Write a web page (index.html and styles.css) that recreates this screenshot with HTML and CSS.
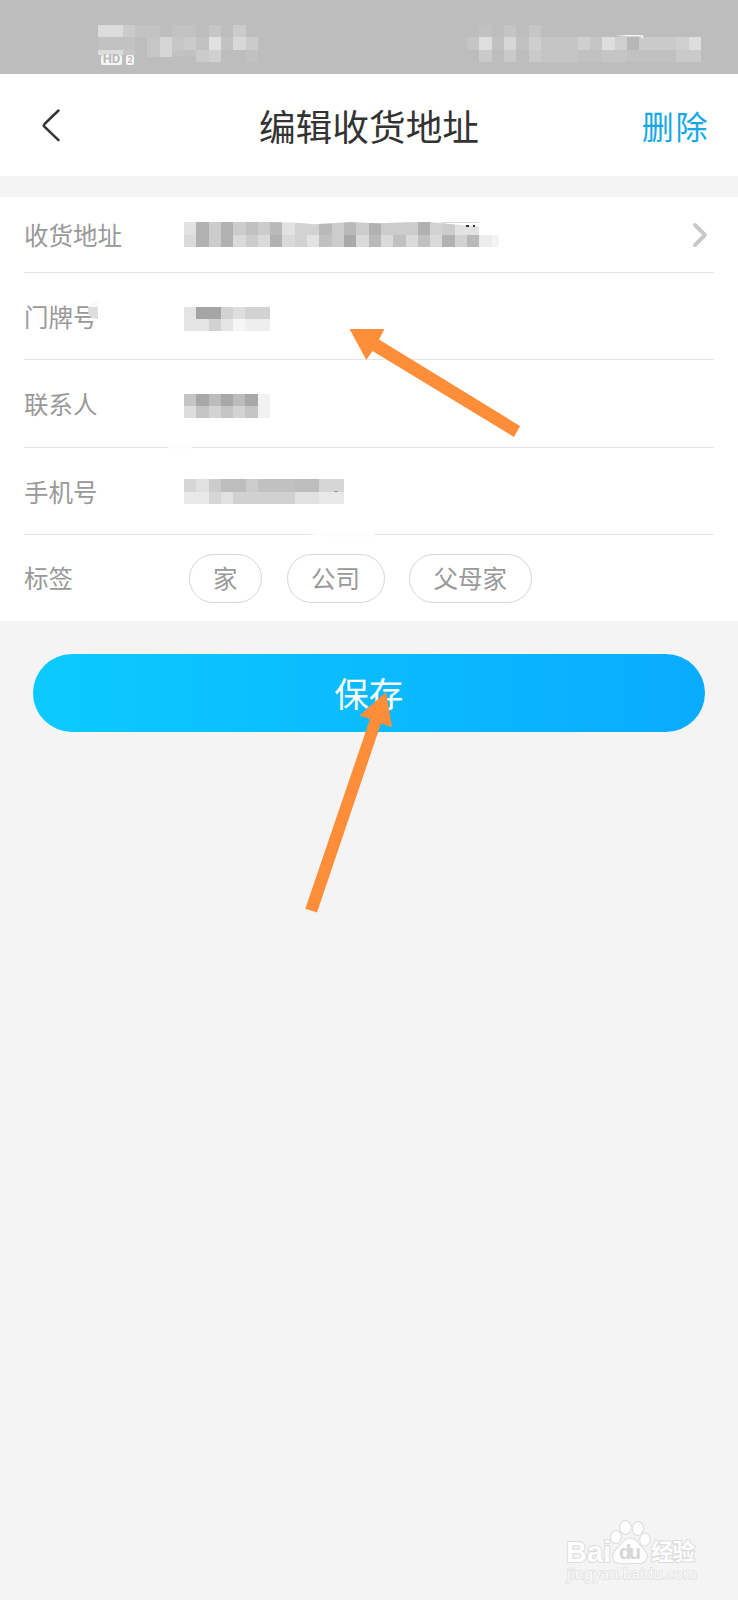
FILE: index.html
```html
<!DOCTYPE html>
<html lang="zh-CN">
<head>
<meta charset="utf-8">
<title>编辑收货地址</title>
<link rel="stylesheet" href="styles.css">
</head>
<body>
<div class="screen">
  <div class="status">
    <div class="status-left">
      <svg class="mosaic" width="160" height="37" viewBox="0 0 13 3" preserveAspectRatio="none" shape-rendering="crispEdges">
        <path fill="#dcdcdc" d="M0 0h2v1h-2zM0 2h2v.45h-2z"/>
        <path fill="#cbcbcb" d="M2 0h1v1h-1zM11 0h1v1h-1zM7 1h1v1h-1zM12 1h1v1h-1zM8 2h1v1h-1z"/>
        <path fill="#c2c2c2" d="M3 0h2v1h-2zM6 0h2v1h-2zM0 1h3v1h-3zM8 1h1v1h-1zM10 1h1v1h-1zM6 2h2v.5h-2zM12 2h1v1h-1z"/>
        <path fill="#c6c6c6" d="M9 0h1v1h-1zM4 1h1v1h-1zM6 1h1v1h-1zM2 2h1v.45h-1zM4 2h1v.6h-1z"/>
        <path fill="#d5d5d5" d="M5 1h1v1.6h-1z"/>
        <path fill="#e1e1e1" d="M9 1h1v1h-1z"/>
        <path fill="#d8d8d8" d="M11 1h1v1h-1z"/>
        <path fill="#d0d0d0" d="M9 2h1v1h-1z"/>
      </svg>
      <div class="hd"><span class="hd-main">HD</span><span class="hd-sim">2</span></div>
    </div>
    <svg class="mosaic" width="234" height="37" viewBox="0 0 19 3" preserveAspectRatio="none" shape-rendering="crispEdges">
      <path fill="#c1c1c1" d="M1 0h1v1h-1zM2 1h1v1h-1zM4 1h1v1h-1zM9 2h2v1h-2zM13 2h4v1h-4z"/>
      <path fill="#c5c5c5" d="M3 0h1v1h-1zM5 0h1v1h-1zM0 1h1v1h-1zM6 1h3v1h-3zM10 1h1v1h-1zM6 2h3v1h-3zM11 2h2v1h-2z"/>
      <path fill="#cacaca" d="M14 1h3v1h-3zM1 2h1v1h-1zM3 2h1v1h-1zM5 2h1v1h-1zM17 2h2v1h-2z"/>
      <path fill="#cfcfcf" d="M5 1h1v1h-1zM9 1h1v1h-1zM12 1h1v1h-1zM17 1h1v1h-1z"/>
      <path fill="#d7d7d7" d="M3 1h1v1h-1z"/>
      <path fill="#dedede" d="M1 1h1v1h-1zM11 1h1v1h-1zM18 1h1v1h-1z"/>
      <path fill="#b7b7b7" d="M13 1h1v1h-1z"/>
      <path fill="#f2f2f2" shape-rendering="auto" d="M12 .9L13 .82H14.300v.26h-.15v-.14h-1.100z"/>
    </svg>
  </div>

  <header class="header">
    <svg class="back" width="20" height="36" viewBox="0 0 20 36"><path d="M17.500 3.500 3.400 17.200Q2.400 18.400 3.400 19.600L17.500 33.200"/></svg>
    <h1 class="title">编辑收货地址</h1>
    <span class="delete">删除</span>
  </header>

  <main class="form">
    <div class="row row-first">
      <span class="label">收货地址</span>
      <svg class="mosaic" width="320" height="25" viewBox="0 0 26 2" preserveAspectRatio="none" shape-rendering="crispEdges">
        <path fill="#e2e2e2" d="M0 0h1v1h-1zM8 0h1v1h-1zM10 1h1v1h-1zM22 0h2v1h-2z"/>
        <path fill="#b1b1b1" d="M1 0h1v2h-1zM3 0h1v2h-1zM15 0h1v1h-1zM19 0h1v1h-1zM21 1h1v1h-1zM7 1h1v1h-1z"/>
        <path fill="#cccccc" d="M2 0h1v2h-1zM4 0h1v1h-1zM6 0h1v1h-1zM12 0h1v2h-1zM14 0h1v1h-1zM16 0h3v1h-3zM21 0h1v1h-1zM5 1h1v1h-1z"/>
        <path fill="#b9b9b9" d="M7 0h1v1h-1zM11 0h1v1h-1zM13 0h1v1h-1zM15 1h1v1h-1zM23 1h1v1h-1z"/>
        <path fill="#c1c1c1" d="M5 0h1v1h-1zM11 1h1v1h-1zM17 1h1v1h-1zM19 1h1v1h-1z"/>
        <path fill="#d2d2d2" d="M9 0h2v1h-2zM20 0h1v1h-1zM9 1h1v1h-1zM22 1h1v1h-1z"/>
        <path fill="#dadada" d="M0 1h1v1h-1zM4 1h1v1h-1zM6 1h1v1h-1zM8 1h1v1h-1zM14 1h1v1h-1zM16 1h1v1h-1zM18 1h1v1h-1zM20 1h1v1h-1z"/>
        <path fill="#a9a9a9" d="M13 1h1v1h-1z"/>
        <path fill="#ececec" d="M24 1h1v1h-1z"/>
        <path fill="#f4f4f4" d="M25 1h.6v1h-.6z"/>
        <path fill="#ffffff" shape-rendering="auto" d="M7 0Q9 0 10.500 .18Q12 .1 13.500 0Q15 .12 16.500 .08Q18 0 19.500 0H24V.35Q21 .12 20 0Z"/>
        <path fill="#d8d8d8" d="M21 0h3v.08h-3z"/>
        <path fill="#333" d="M22.950 .22h.18v.14h-.18zM23.450 .24h.18v.14h-.18z"/>
      </svg>
      <svg class="chevron" width="16" height="26" viewBox="0 0 16 26"><path d="M3 3 12.200 12.200Q13 13 12.200 13.800L3 23"/></svg>
    </div>
    <div class="row">
      <span class="label">门牌号<span class="smudge"></span></span>
      <svg class="mosaic lowered" width="86" height="24" viewBox="0 0 7 2" preserveAspectRatio="none" shape-rendering="crispEdges">
        <path fill="#e4e4e4" d="M0 0h1v2h-1zM1 1h1v1h-1zM3 1h1v1h-1z"/>
        <path fill="#a5a5a5" d="M1 0h2v1h-2z"/>
        <path fill="#d2d2d2" d="M3 0h1v1h-1zM5 0h2v1h-2zM2 1h1v1h-1z"/>
        <path fill="#dedede" d="M4 0h1v1h-1z"/>
        <path fill="#f6f6f6" d="M4 1h1v1h-1z"/>
        <path fill="#eeeeee" d="M5 1h2v1h-2z"/>
      </svg>
    </div>
    <div class="row">
      <span class="label">联系人</span>
      <svg class="mosaic lowered" width="86" height="24" viewBox="0 0 7 2" preserveAspectRatio="none" shape-rendering="crispEdges">
        <path fill="#c5c5c5" d="M0 0h1v1h-1zM1 1h1v1h-1zM3 1h1v1h-1zM5 1h1v1h-1z"/>
        <path fill="#a8a8a8" d="M1 0h1v1h-1zM3 0h1v1h-1zM5 0h1v1h-1z"/>
        <path fill="#bcbcbc" d="M2 0h1v1h-1zM4 0h1v1h-1z"/>
        <path fill="#d3d3d3" d="M2 1h1v1h-1zM4 1h1v1h-1z"/>
        <path fill="#dddddd" d="M0 1h1v1h-1z"/>
        <path fill="#f2f2f2" d="M6 0h1v2h-1z"/>
      </svg>
    </div>
    <div class="row">
      <span class="label">手机号</span>
      <svg class="mosaic" width="160" height="25" viewBox="0 0 13 2" preserveAspectRatio="none" shape-rendering="crispEdges">
        <path fill="#d6d6d6" d="M0 0h1v1h-1zM11 0h2v1h-2zM2 1h1v1h-1z"/>
        <path fill="#e1e1e1" d="M1 0h1v1h-1zM3 1h1v1h-1zM9 1h2v1h-2z"/>
        <path fill="#cccccc" d="M2 0h1v1h-1zM5 0h1v1h-1z"/>
        <path fill="#bdbdbd" d="M3 0h2v1h-2zM9 0h2v1h-2z"/>
        <path fill="#c1c1c1" d="M6 0h3v1h-3z"/>
        <path fill="#d1d1d1" d="M4 1h5v1h-5z"/>
        <path fill="#e9e9e9" d="M0 1h2v1h-2zM11 1h2v1h-2z"/>
        <path fill="#999" d="M12.200 .92h.3v.1h-.3z"/>
      </svg>
    </div>
    <div class="row row-tags">
      <span class="label">标签</span>
      <div class="tags"><span class="tag">家</span><span class="tag">公司</span><span class="tag">父母家</span></div>
    </div>
  </main>

  <button class="save">保存</button>

  <svg class="arrows" width="738" height="1600" viewBox="0 0 738 1600">
    <g fill="#fdfdfd"><rect x="168" y="444" width="24" height="5"/><path d="M290 533Q320 534.500 330 537H374V532Z"/></g>
    <g fill="#ff8d3a">
      <path d="M349.500 329H384.500L379 339.500 520 426 514 437 372.500 351 366.300 360Z"/>
      <path d="M386 692 392 727 381 723.500 317 912.500 305.300 908.800 370 719 359.500 715.500Z"/>
    </g>
  </svg>

  <div class="watermark">
    <svg width="136" height="68" viewBox="0 0 136 68">
      <g class="wm-mark">
        <text class="wm-bai" x="1" y="44" textLength="45">Bai</text>
        <ellipse cx="51" cy="19" rx="5" ry="6"/>
        <ellipse cx="60.500" cy="9.500" rx="5.200" ry="6.500"/>
        <ellipse cx="73" cy="10.500" rx="5" ry="6.500"/>
        <ellipse cx="80" cy="21.500" rx="4.800" ry="6"/>
        <path d="M65 20.500C60 20.500 57 26 52 31C45 38 48 45 56 45C62 45.500 68 45 73 45C82 45.500 85 38 78 31C73 26 71 20.500 65 20.500Z"/>
        <text class="wm-cn" x="86" y="42" textLength="44">经验</text>
      </g>
      <text class="wm-du" x="54" y="41" textLength="22">du</text>
      <text class="wm-url" x="2" y="61" textLength="130">jingyan.baidu.com</text>
    </svg>
  </div>
</div>
</body>
</html>
```

FILE: styles.css
```css
* { box-sizing: border-box; }

body {
  margin: 0;
  background: #f4f4f4;
  font-family: "Noto Sans CJK SC", sans-serif;
}

.screen {
  position: relative;
  display: flex;
  flex-direction: column;
  width: 738px;
  height: 1600px;
  overflow: hidden;
}

.mosaic { display: block; flex: none; }
.lowered { margin-top: 4px; }

.status {
  display: flex;
  justify-content: space-between;
  height: 74px;
  padding: 25px 37px 0 98px;
  background: #bdbdbd;
}

.status-left { width: 160px; }

.hd {
  display: flex;
  align-items: flex-end;
  gap: 4px;
  margin: -7px 0 0 3px;
  font-family: Roboto, sans-serif;
  font-weight: 700;
  color: #b8b8b8;
}

.hd-main,
.hd-sim {
  background: #f5f5f5;
  border-radius: 2px;
  text-align: center;
}

.hd-main {
  width: 21px;
  height: 10px;
  font-size: 13px;
  line-height: 7px;
}

.hd-sim {
  width: 8px;
  height: 10px;
  font-size: 9px;
  line-height: 10px;
}

.header {
  display: grid;
  grid-template-columns: 1fr auto 1fr;
  align-items: center;
  height: 102px;
  padding: 0 29px 0 41px;
  background: #fff;
}

.back {
  fill: none;
  stroke: #333;
  stroke-width: 2.5;
  stroke-linecap: round;
}

.title {
  margin: -1px 0 0 -12px;
  font-size: 36.7px;
  font-weight: 400;
  line-height: 54px;
  color: #333;
}

.delete {
  justify-self: end;
  margin-top: -1px;
  font-size: 32px;
  line-height: 48px;
  letter-spacing: 1.6px;
  color: #14a8e8;
}

.form {
  height: 424px;
  margin-top: 21px;
  padding: 0 24px;
  background: #fff;
}

.row {
  display: flex;
  align-items: center;
  height: 87.5px;
  padding-top: 2px;
  border-bottom: 1.500px solid #e4e4e4;
}

.row-first { height: 75.500px; padding-top: 1px; }
.row-tags { height: 86px; padding-top: 0; border-bottom: 0; }

.label {
  position: relative;
  flex: none;
  width: 160px;
  font-size: 24.5px;
  line-height: 36px;
  color: #999;
}

.smudge {
  position: absolute;
  left: 64px;
  top: 3px;
  width: 10px;
  height: 17px;
  border-radius: 6px 0 0 8px;
  background: linear-gradient(#f8f8f8 30%, #dedede 30%);
}

.chevron {
  margin-left: auto;
  margin-right: 6px;
  fill: none;
  stroke: #c8c8c8;
  stroke-width: 4;
  stroke-linecap: round;
}

.tags {
  display: flex;
  gap: 24.5px;
  margin-left: 4.5px;
}

.tag {
  height: 49px;
  padding: 0 23.5px;
  border: 1px solid #d6d6d6;
  border-radius: 25px;
  font-size: 24.5px;
  line-height: 46px;
  color: #999;
}

.save {
  height: 78px;
  margin: 33px 33px 0 32.5px;
  padding: 0 0 2px;
  border: 0;
  border-radius: 39px;
  background: linear-gradient(90deg, #0bcaff, #0aabff);
  font-family: inherit;
  font-size: 34.5px;
  line-height: 50px;
  color: #fff;
}

.arrows {
  position: absolute;
  left: 0;
  top: 0;
  pointer-events: none;
}

.watermark {
  position: absolute;
  left: 565px;
  top: 1518px;
}

.wm-mark {
  fill: #fdfdfd;
  stroke: #dcdcdc;
  stroke-width: 2;
  paint-order: stroke;
}

.wm-bai { font: 700 29px "Liberation Sans", sans-serif; }
.wm-cn { font: 700 22.5px "Noto Sans CJK SC", sans-serif; }
.wm-du { font: 700 20px "Liberation Sans", sans-serif; fill: #d6d6d6; }

.wm-url {
  font: 15px "Noto Sans", sans-serif;
  fill: #fbfbfb;
  stroke: #e0e0e0;
  stroke-width: 1.5;
  paint-order: stroke;
}
```
